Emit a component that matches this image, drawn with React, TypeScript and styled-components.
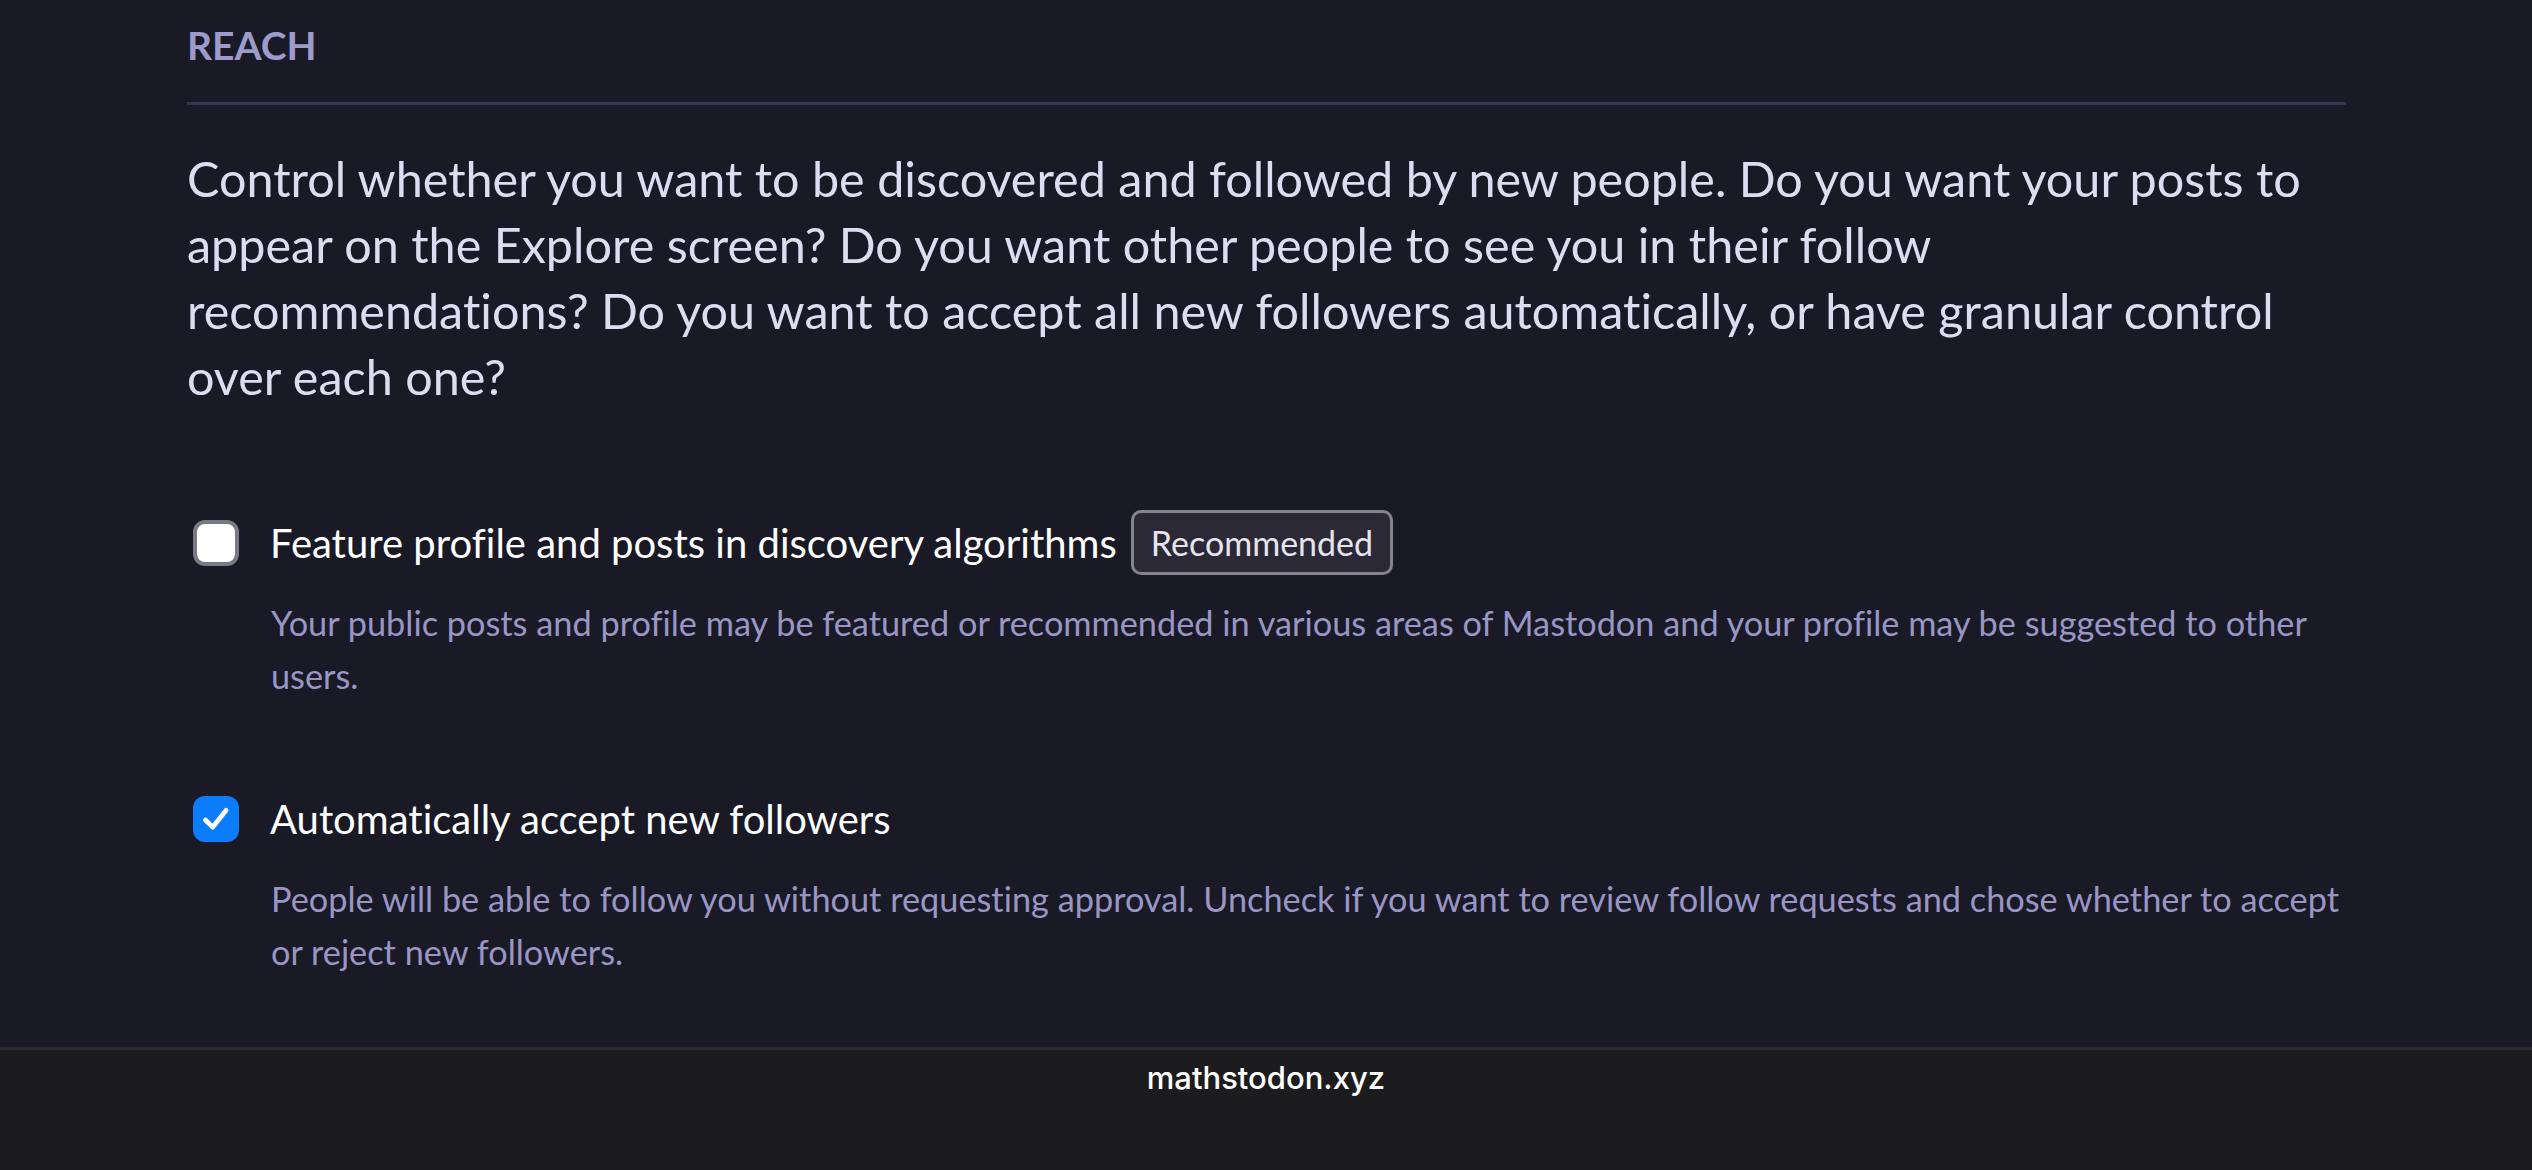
import styled, { createGlobalStyle } from "styled-components"

const GlobalStyle = createGlobalStyle`
  html, body {
    margin: 0;
    padding: 0;
    background: #191a25;
  }
  * {
    box-sizing: border-box;
  }
`

const Page = styled.div`
  height: 100vh;
  display: flex;
  flex-direction: column;
  font-family: Lato, "Noto Sans", sans-serif;
  font-variant-ligatures: none;
  overflow: hidden;
`

const Main = styled.main`
  flex: 1;
  padding: 22px 186px 0 187px;
`

const SectionTitle = styled.h3`
  margin: 0;
  font-size: 39px;
  line-height: 47px;
  font-weight: 700;
  color: #9c9bcb;
  padding-bottom: 33px;
  border-bottom: 3px solid #363650;
`

const Lead = styled.p`
  margin: 40px 16px 0 0;
  font-size: 48.5px;
  line-height: 66px;
  color: #dddcf0;
`

const Field = styled.div<{ first?: boolean }>`
  margin-top: ${props => props.first ? '101px' : '84px'};
`

const FieldRow = styled.label`
  display: flex;
  align-items: center;
  min-height: 65px;
  padding-left: 6px;
`

const Box = styled.span<{ checked?: boolean }>`
  width: 46px;
  height: 46px;
  flex-shrink: 0;
  border-radius: 12px;
  display: flex;
  align-items: center;
  justify-content: center;
  background: ${props => props.checked ? '#0b7cfa' : '#fff'};
  border: ${props => props.checked ? 'none' : '4px solid #7a7a84'};
  margin-right: 31px;
`

const Label = styled.span`
  font-size: 40px;
  color: #fff;
`

const Badge = styled.span`
  margin-left: 14px;
  height: 65px;
  padding: 0 17px;
  display: inline-flex;
  align-items: center;
  border: 3px solid #85838f;
  border-radius: 10px;
  background: #2a2935;
  color: #e6e4ef;
  font-size: 34px;
`

const Hint = styled.p`
  margin: 21px 0 0 84px;
  font-size: 34.3px;
  line-height: 53px;
  color: #9996c6;
`

const Footer = styled.footer`
  height: 123px;
  flex-shrink: 0;
  background: #1c1c1e;
  border-top: 3px solid #2b2b2f;
  padding-top: 10px;
  text-align: center;
  font-family: Inter, "Noto Sans", sans-serif;
  font-size: 31px;
  line-height: 35px;
  font-weight: 500;
  color: #fff;
`

const Check = () => (
  <svg width="48" height="48" viewBox="0 0 48 48">
    <path d="M13 25 L20.5 32.5 L34.5 15" fill="none" stroke="#fff" strokeWidth="5" strokeLinecap="round" strokeLinejoin="round" />
  </svg>
)

export default function App() {
  return (
    <>
      <GlobalStyle />
      <Page>
        <Main>
          <SectionTitle>REACH</SectionTitle>
          <Lead>
            Control whether you want to be discovered and followed by new people. Do you want your posts to appear on the Explore screen? Do you want other people to see you in their follow recommendations? Do you want to accept all new followers automatically, or have granular control over each one?
          </Lead>
          <Field first>
            <FieldRow>
              <Box />
              <Label>Feature profile and posts in discovery algorithms</Label>
              <Badge>Recommended</Badge>
            </FieldRow>
            <Hint>
              Your public posts and profile may be featured or recommended in various areas of Mastodon and your profile may be suggested to other users.
            </Hint>
          </Field>
          <Field>
            <FieldRow>
              <Box checked><Check /></Box>
              <Label>Automatically accept new followers</Label>
            </FieldRow>
            <Hint>
              People will be able to follow you without requesting approval. Uncheck if you want to review follow requests and chose whether to accept or reject new followers.
            </Hint>
          </Field>
        </Main>
        <Footer>mathstodon.xyz</Footer>
      </Page>
    </>
  )
}
